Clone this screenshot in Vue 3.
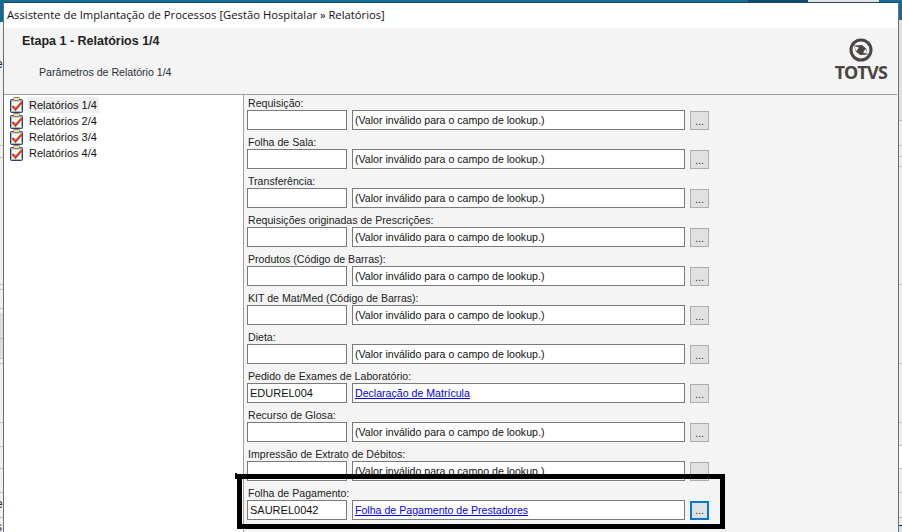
<script setup>
const treeItems = ['Relatórios 1/4', 'Relatórios 2/4', 'Relatórios 3/4', 'Relatórios 4/4']
const invalid = '(Valor inválido para o campo de lookup.)'
const fields = [
  { label: 'Requisição:', code: '', text: invalid },
  { label: 'Folha de Sala:', code: '', text: invalid },
  { label: 'Transferência:', code: '', text: invalid },
  { label: 'Requisições originadas de Prescrições:', code: '', text: invalid },
  { label: 'Produtos (Código de Barras):', code: '', text: invalid },
  { label: 'KIT de Mat/Med (Código de Barras):', code: '', text: invalid },
  { label: 'Dieta:', code: '', text: invalid },
  { label: 'Pedido de Exames de Laboratório:', code: 'EDUREL004', text: 'Declaração de Matrícula', link: true },
  { label: 'Recurso de Glosa:', code: '', text: invalid },
  { label: 'Impressão de Extrato de Débitos:', code: '', text: invalid },
  { label: 'Folha de Pagamento:', code: 'SAUREL0042', text: 'Folha de Pagamento de Prestadores', link: true, focus: true }
]
const leftLines = [145, 157, 284, 289, 308, 338, 358, 363, 422, 446, 468, 492, 517]
const rightLines = [120, 145, 156, 166, 284, 363, 422, 445, 468, 492, 517]
</script>

<template>
  <div class="desktop">
    <div class="topband"><i class="seg dark"></i><i class="seg light"></i></div>
    <div class="side left">
      <i class="graypatch"></i>
      <i v-for="y in leftLines" :key="y" class="line" :style="{ top: y + 'px' }"></i>
      <span class="frag" style="top: 57px">e</span>
      <span class="frag" style="top: 190px">)</span>
      <span class="frag" style="top: 475px">/</span>
      <span class="frag" style="top: 497px">e</span>
      <span class="frag" style="top: 520px">s</span>
    </div>
    <div class="side right">
      <i class="whitegap"></i>
      <i v-for="y in rightLines" :key="y" class="line" :style="{ top: y + 'px' }"></i>
      <i class="corner"></i>
    </div>

    <section class="window">
      <div class="titlebar">Assistente de Implantação de Processos [Gestão Hospitalar » Relatórios]</div>
      <header class="head">
        <div class="head-text">
          <h1>Etapa 1 - Relatórios 1/4</h1>
          <p>Parâmetros de Relatório 1/4</p>
        </div>
        <div class="logo">
          <svg width="24" height="24" viewBox="0 0 24 24">
            <circle cx="12" cy="12" r="10" fill="#f4f4f4" stroke="#4a4543" stroke-width="3" />
            <path d="M5 7.5 L13 7 L17 10.5 L19 16.5 L11 17 L7 13.5 Z" fill="#4a4543" />
            <path d="M5 8 L10 9.5 L7.5 13 Z M19 16 L14 14.5 L16.5 11 Z" fill="#f4f4f4" />
          </svg>
          <span>TOTVS</span>
        </div>
      </header>
      <div class="body">
        <nav class="tree">
          <div v-for="(item, i) in treeItems" :key="item" class="node">
            <svg class="clip" width="14" height="16" viewBox="0 0 14 16">
              <rect x="0.5" y="2.5" width="12" height="13" rx="1" fill="#9db4d2" stroke="#2f4168" />
              <rect x="2" y="4.5" width="9" height="9.5" fill="#fdfdf8" />
              <rect x="3.5" y="0.5" width="6" height="3" rx="1" fill="#f1dfa8" stroke="#8d7a4c" />
              <path d="M2.5 9 L5.5 12.5 L12 5" fill="none" stroke="#e2391f" stroke-width="2.2" />
            </svg>
            <span class="node-label" :class="{ selected: i === 0 }">{{ item }}</span>
          </div>
        </nav>
        <div class="form">
          <div v-for="f in fields" :key="f.label" class="field">
            <label>{{ f.label }}</label>
            <div class="controls">
              <div class="box code">{{ f.code }}</div>
              <div class="box desc"><a v-if="f.link" href="#">{{ f.text }}</a><template v-else>{{ f.text }}</template></div>
              <button class="more" :class="{ focus: f.focus }">...</button>
            </div>
          </div>
        </div>
      </div>
    </section>

    <div class="mark"><i></i></div>
  </div>
</template>

<style>
html, body { margin: 0; overflow: hidden; }
</style>

<style scoped>
.desktop {
  position: relative;
  width: 902px;
  height: 532px;
  overflow: hidden;
  background: #f0f0f0;
  font-family: "Liberation Sans", Arial, sans-serif;
  font-size: 10.6px;
  color: #111;
}
.topband {
  position: absolute;
  left: 0;
  top: 0;
  width: 902px;
  height: 2px;
  background: #0f6d97;
}
.seg { position: absolute; top: 0; height: 2px; }
.seg.dark { left: 748px; width: 60px; background: #0b4f70; }
.seg.light { left: 808px; width: 71px; background: #e2e2e2; }
.side { position: absolute; top: 0; height: 532px; overflow: hidden; }
.side.left { left: 0; width: 3px; background: #f0f0f0; }
.side.left::before {
  content: "";
  position: absolute;
  left: 0;
  top: 0;
  width: 3px;
  height: 22px;
  background: #0f6d97;
}
.side.right { left: 899px; width: 3px; background: #f0f0f0; }
.side.right::before {
  content: "";
  position: absolute;
  left: 0;
  top: 0;
  width: 3px;
  height: 120px;
  background: linear-gradient(#0f6d97 20px, #e2e2e2 20px);
}
.line { position: absolute; left: 0; width: 4px; height: 1px; background: #bdbdbd; }
.graypatch { position: absolute; left: 0; top: 313px; width: 3px; height: 45px; background: #dcdcdc; }
.whitegap { position: absolute; left: 0; top: 446px; width: 3px; height: 22px; background: #fff; }
.corner {
  position: absolute;
  left: 0;
  top: 525px;
  width: 3px;
  height: 7px;
  border-top: 1px solid #222;
  box-sizing: border-box;
  background: #cfe6f5;
}
.frag {
  position: absolute;
  left: -4px;
  font-size: 12px;
  line-height: 14px;
  color: #1c2c4a;
}
.window {
  position: absolute;
  left: 3px;
  top: 2px;
  width: 894px;
  height: 530px;
  border: 1px solid #6f6f6f;
  border-top-color: #23475c;
  border-bottom: 0;
  background: #f4f4f4;
  display: flex;
  flex-direction: column;
}
.titlebar {
  height: 25px;
  background: #fff;
  padding-left: 3px;
  font-family: "Open Sans", sans-serif;
  font-size: 11.25px;
  line-height: 24px;
  color: #111;
  white-space: nowrap;
}
.head {
  height: 66px;
  border-bottom: 1px solid #a0a0a0;
  margin-right: 1px;
  display: flex;
  justify-content: space-between;
  flex-shrink: 0;
}
.head-text { padding-left: 18px; }
.head h1 {
  margin: 0;
  padding-top: 6px;
  font-size: 12.5px;
  line-height: 14px;
  font-weight: 700;
  color: #222;
}
.head p {
  margin: 17px 0 0 17px;
  line-height: 14px;
  color: #2a2f3a;
}
.logo {
  width: 52px;
  margin-right: 10px;
  padding-top: 10px;
  display: flex;
  flex-direction: column;
  align-items: center;
}
.logo span {
  font-family: "Noto Sans", sans-serif;
  font-weight: 700;
  font-size: 18px;
  line-height: 18px;
  margin-top: 1px;
  letter-spacing: -0.6px;
  color: #4a4543;
}
.body { flex: 1; display: flex; min-height: 0; }
.tree {
  width: 240px;
  background: #fff;
  border-right: 1px solid #a0a0a0;
  padding: 2px 0 0 6px;
  box-sizing: border-box;
  flex-shrink: 0;
}
.node { display: flex; align-items: center; height: 16px; gap: 4px; font-size: 11px; }
.node-label { padding: 0 2px 0 1px; line-height: 16px; }
.node-label.selected { background: #f0f0f0; }
.clip { flex-shrink: 0; }
.form { padding: 1px 0 0 3px; flex: 1; }
.field { height: 39px; }
.field label { display: block; height: 14px; line-height: 14px; padding-left: 1px; color: #222; }
.controls { display: flex; align-items: flex-start; }
.box {
  box-sizing: border-box;
  height: 20px;
  border: 1px solid #7a7a7a;
  background: #fff;
  line-height: 18px;
  padding-left: 2px;
  white-space: nowrap;
}
.code { width: 100px; font-size: 11px; }
.desc { width: 333px; margin-left: 5px; }
.desc a { color: #0000ee; text-decoration: underline; }
.more {
  box-sizing: border-box;
  width: 19px;
  height: 19px;
  margin: 1px 0 0 5px;
  padding: 0;
  border: 1px solid #adadad;
  background: #e1e1e1;
  font: 11px/18px "Liberation Sans", sans-serif;
  color: #333;
}
.more.focus { border: 2px solid #0078d7; line-height: 15px; }
.mark {
  position: absolute;
  left: 237px;
  top: 474px;
  width: 478px;
  height: 45px;
  border: 5px solid #000;
}
.mark i {
  position: absolute;
  left: -7px;
  top: -6px;
  width: 2px;
  height: 6px;
  background: #000;
}
</style>
